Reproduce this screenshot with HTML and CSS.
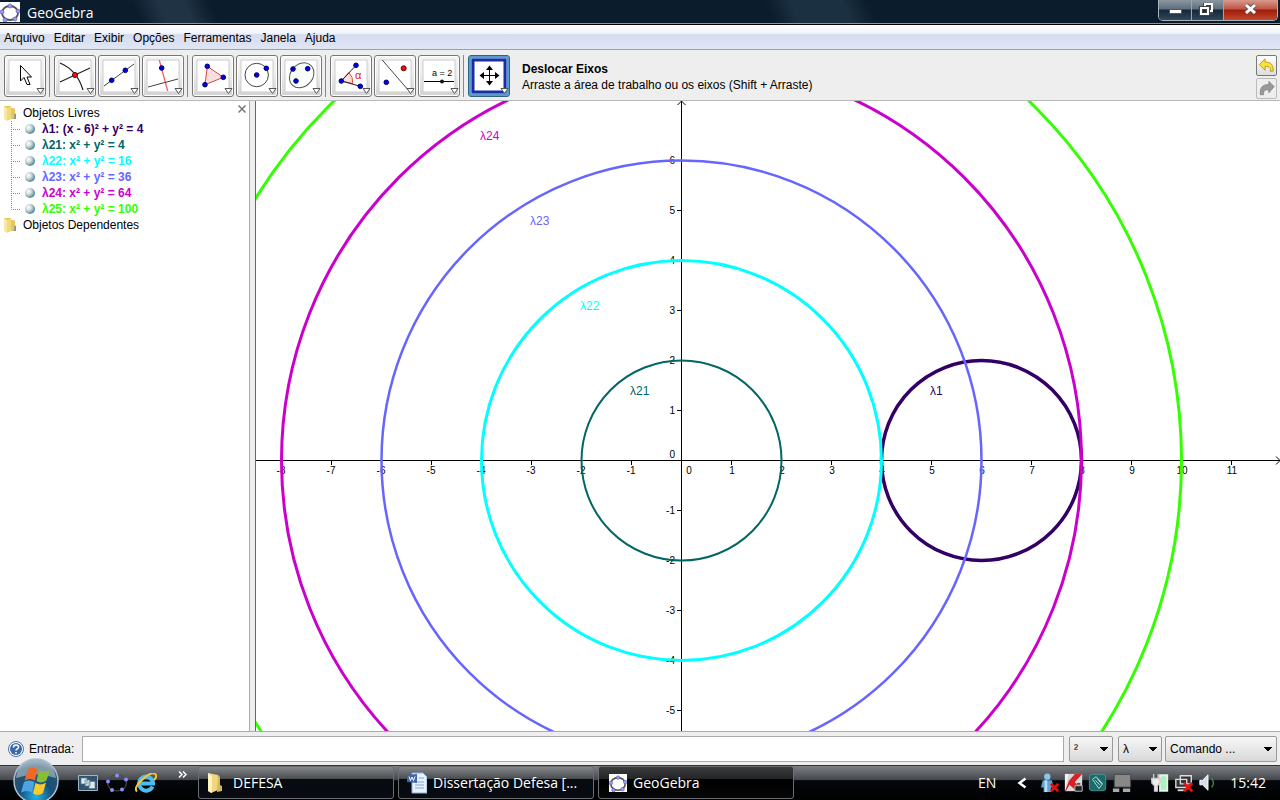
FILE: index.html
```html
<!DOCTYPE html>
<html lang="pt">
<head>
<meta charset="utf-8">
<title>GeoGebra</title>
<link rel="stylesheet" href="styles.css">
</head>
<body>
<svg class="defs" width="0" height="0" aria-hidden="true">
  <symbol id="logo" viewBox="0 0 20 20">
    <ellipse cx="10" cy="11" rx="8" ry="7" fill="none" stroke="#555" stroke-width="1.800"/>
    <g fill="#9999ff" stroke="#5555aa" stroke-width=".6"><circle cx="10" cy="4" r="2"/><circle cx="18" cy="9" r="2"/><circle cx="15" cy="17" r="2"/><circle cx="5" cy="18" r="2"/><circle cx="2" cy="10" r="2"/></g>
  </symbol>
  <symbol id="drop" viewBox="0 0 42 42"><path d="M33 33.500h7l-3.500 5z" fill="#fff" stroke="#555"/></symbol>
  <symbol id="folder" viewBox="0 0 14 16">
    <path d="M1 1h7v13l-4 1.500-3-2z" fill="#e3c65f"/><path d="M1 1l3 2v12.500l-3-2z" fill="#f8e8a0"/><path d="M8 2.500l4 1v10.500H7V5z" fill="#e4c662"/><path d="M4 3l4-1.500V14l-4 1.500z" fill="#f0d87c"/><path d="M11.500 8l1.500 1v5h-2z" fill="#7f9a86"/>
  </symbol>
</svg>
<header class="titlebar">
  <svg class="app-logo" viewBox="0 0 20 20"><use href="#logo"/></svg>
  <h1 class="app-title">GeoGebra</h1>
  <div class="window-buttons">
    <button class="win" aria-label="Minimizar"><svg width="32" height="20"><rect x="10.500" y="9.500" width="12" height="4" fill="#fff" stroke="#555"/></svg></button>
    <button class="win" aria-label="Restaurar"><svg width="31" height="20"><g fill="none" stroke="#444" stroke-width="4"><path d="M13 6v-1h6v7h-2"/><rect x="9" y="8" width="7" height="6"/></g><g fill="none" stroke="#fff" stroke-width="2"><path d="M13 6v-2h7v7h-2"/><rect x="9" y="8" width="7" height="6"/></g></svg></button>
    <button class="win win-close" aria-label="Fechar"><svg width="53" height="20"><path d="M22 5l9 8m0-8l-9 8" stroke="#655" stroke-width="5"/><path d="M22 5l9 8m0-8l-9 8" stroke="#fff" stroke-width="3"/></svg></button>
  </div>
</header>
<nav class="menubar">
  <button>Arquivo</button><button>Editar</button><button>Exibir</button><button>Opções</button><button>Ferramentas</button><button>Janela</button><button>Ajuda</button>
</nav>
<div class="toolbar">
  <div class="tools">
    <div class="tool-group">
      <button class="tool" aria-label="Mover"><svg viewBox="0 0 42 42"><path class="paper" d="M5 5h32v32H5z"/><path d="M16.500 10.500v15.500l3.500-3.500 3 7h3l-3-7.500h4.500z" fill="#fff" stroke="#000"/><use href="#drop"/></svg></button>
    </div>
    <div class="tool-group">
      <button class="tool" aria-label="Interseção"><svg viewBox="0 0 42 42"><path class="paper" d="M5 5h32v32H5z"/><path d="M6 8Q23 15 29 35M6 27l30-14" fill="none" stroke="#222" stroke-width="1.200"/><circle cx="21" cy="20" r="2.500" fill="#e11" stroke="#600"/><use href="#drop"/></svg></button>
      <button class="tool" aria-label="Reta"><svg viewBox="0 0 42 42"><path class="paper" d="M5 5h32v32H5z"/><path d="M6 31L36 9" stroke="#444"/><g class="dot"><circle cx="13.700" cy="25.300" r="2.300"/><circle cx="27.300" cy="15.300" r="2.300"/></g><use href="#drop"/></svg></button>
      <button class="tool" aria-label="Perpendicular"><svg viewBox="0 0 42 42"><path class="paper" d="M5 5h32v32H5z"/><path d="M17.300 5l8.400 31" stroke="#f55" stroke-width="1.200"/><path d="M6 32l30-8" stroke="#444"/><circle class="dot" cx="19.700" cy="13" r="2.300"/><use href="#drop"/></svg></button>
    </div>
    <div class="tool-group">
      <button class="tool" aria-label="Polígono"><svg viewBox="0 0 42 42"><path class="paper" d="M5 5h32v32H5z"/><path d="M15.300 11.300l16 11L13 29.700z" fill="#fbe0e0" stroke="#d44"/><g class="dot"><circle cx="15.300" cy="11.300" r="2.300"/><circle cx="31.300" cy="22.300" r="2.300"/><circle cx="13" cy="29.700" r="2.300"/></g><use href="#drop"/></svg></button>
      <button class="tool" aria-label="Círculo"><svg viewBox="0 0 42 42"><path class="paper" d="M5 5h32v32H5z"/><circle cx="20.700" cy="20" r="11.700" fill="none" stroke="#444"/><g class="dot"><circle cx="20.700" cy="20" r="2.300"/><circle cx="30.300" cy="13.300" r="2.300"/></g><use href="#drop"/></svg></button>
      <button class="tool" aria-label="Elipse"><svg viewBox="0 0 42 42"><path class="paper" d="M5 5h32v32H5z"/><ellipse cx="21.700" cy="20.300" rx="13.500" ry="11" transform="rotate(-48 21.700 20.300)" fill="#fafffa" stroke="#555"/><g class="dot"><circle cx="13" cy="14" r="2.300"/><circle cx="27.700" cy="13.700" r="2.300"/><circle cx="16" cy="26" r="2.300"/></g><use href="#drop"/></svg></button>
    </div>
    <div class="tool-group">
      <button class="tool" aria-label="Ângulo"><svg viewBox="0 0 42 42"><path class="paper" d="M5 5h32v32H5z"/><path d="M11.300 26l7.500-8.500q4.500 4.500 4 11z" fill="#fbe0e0" stroke="#e44"/><path d="M26 10.300L11.300 26l19 5.300" fill="none" stroke="#222"/><g class="dot"><circle cx="11.300" cy="26" r="2.300"/><circle cx="26" cy="10.300" r="2.300"/><circle cx="30.300" cy="31.300" r="2.300"/></g><text class="alpha" x="25" y="24">α</text><use href="#drop"/></svg></button>
      <button class="tool" aria-label="Reflexão"><svg viewBox="0 0 42 42"><path class="paper" d="M5 5h32v32H5z"/><path d="M8.300 5l26.700 31" stroke="#444"/><circle cx="29.700" cy="13.300" r="2.500" fill="#e11" stroke="#600"/><circle class="dot" cx="12.300" cy="27.300" r="2.300"/><use href="#drop"/></svg></button>
      <button class="tool" aria-label="Seletor"><svg viewBox="0 0 42 42"><path class="paper" d="M5 5h32v32H5z"/><path d="M6 26.500h30" stroke="#000"/><circle cx="24" cy="26.500" r="2" fill="#111"/><text class="slider-text" x="14" y="21">a = 2</text><use href="#drop"/></svg></button>
    </div>
    <div class="tool-group">
      <button class="tool tool-active" aria-label="Deslocar Eixos"><svg viewBox="0 0 42 42"><path d="M5 5h32v32H5z" fill="#fff" stroke="#1c2ba6" stroke-width="3"/><path d="M12 20.500h19M21.500 11v19" stroke="#000"/><path d="M21.500 10.500l3.500 4.500h-7zM21.500 30.500l3.500-4.500h-7zM11.500 20.500l4.500-3.500v7zM31.500 20.500l-4.500-3.500v7z"/><use href="#drop"/></svg></button>
    </div>
  </div>
  <div class="tool-help"><strong>Deslocar Eixos</strong><span>Arraste a área de trabalho ou os eixos (Shift + Arraste)</span></div>
  <div class="history">
    <button class="hist" aria-label="Desfazer"><svg viewBox="0 0 20 20"><path d="M2.500 9l6-6v3.500c6-.500 9 3 8.500 9.500h-3c1-4-1-5.500-5.500-5v4z" fill="#fbe335" stroke="#b99a12"/></svg></button>
    <button class="hist hist-off" aria-label="Refazer" disabled><svg viewBox="0 0 20 20"><path d="M18 8l-5.500-5.500V6C6 5.500 3 9 3.500 16.500h3.500c-.500-4 1-5.500 5.500-5v3z" fill="#999" stroke="#888"/></svg></button>
  </div>
</div>
<main class="workspace">
  <aside class="algebra">
    <button class="close" aria-label="Fechar painel"><svg viewBox="0 0 8 8"><path d="M.500.500l7 7m0-7l-7 7" stroke="#777" stroke-width="1.500"/></svg></button>
    <ul class="tree">
      <li><div class="row folder-row"><svg class="folder" viewBox="0 0 14 16"><use href="#folder"/></svg>Objetos Livres</div>
        <ul class="branch">
          <li class="row leaf c1"><i class="ball"></i>λ1: (x - 6)² + y² = 4</li>
          <li class="row leaf c21"><i class="ball"></i>λ21: x² + y² = 4</li>
          <li class="row leaf c22"><i class="ball"></i>λ22: x² + y² = 16</li>
          <li class="row leaf c23"><i class="ball"></i>λ23: x² + y² = 36</li>
          <li class="row leaf c24"><i class="ball"></i>λ24: x² + y² = 64</li>
          <li class="row leaf c25"><i class="ball"></i>λ25: x² + y² = 100</li>
        </ul>
      </li>
      <li><div class="row folder-row"><svg class="folder" viewBox="0 0 14 16"><use href="#folder"/></svg>Objetos Dependentes</div></li>
    </ul>
  </aside>
  <div class="splitter"></div>
  <section class="drawing">
    <svg class="plot" viewBox="256 101 1024 630" preserveAspectRatio="xMidYMid slice">
      <g class="axis">
        <path d="M256 460.500h1024M681.500 101v630"/>
        <path d="M1276 456.500l4 4-4 4M677.500 105l4-4 4 4"/>
        <path d="M281.500 460v5M331.500 460v5M381.500 460v5M431.500 460v5M481.500 460v5M531.500 460v5M581.500 460v5M631.500 460v5M731.500 460v5M781.500 460v5M831.500 460v5M881.500 460v5M931.500 460v5M981.500 460v5M1031.500 460v5M1081.500 460v5M1131.500 460v5M1181.500 460v5M1231.500 460v5"/>
        <path d="M677 160.500h5M677 210.500h5M677 260.500h5M677 310.500h5M677 360.500h5M677 410.500h5M677 510.500h5M677 560.500h5M677 610.500h5M677 660.500h5M677 710.500h5"/>
      </g>
      <g class="numbers x-numbers">
        <text x="281" y="474">-8</text><text x="331" y="474">-7</text><text x="381" y="474">-6</text><text x="431" y="474">-5</text><text x="481" y="474">-4</text><text x="531" y="474">-3</text><text x="581" y="474">-2</text><text x="631" y="474">-1</text><text x="689" y="474">0</text><text x="732" y="474">1</text><text x="782" y="474">2</text><text x="832" y="474">3</text><text x="882" y="474">4</text><text x="932" y="474">5</text><text x="982" y="474">6</text><text x="1032" y="474">7</text><text x="1082" y="474">8</text><text x="1132" y="474">9</text><text x="1182" y="474">10</text><text x="1232" y="474">11</text>
      </g>
      <g class="numbers y-numbers">
        <text x="675" y="164">6</text><text x="675" y="214">5</text><text x="675" y="264">4</text><text x="675" y="314">3</text><text x="675" y="364">2</text><text x="675" y="414">1</text><text x="675" y="458">0</text><text x="675" y="514">-1</text><text x="675" y="564">-2</text><text x="675" y="614">-3</text><text x="675" y="664">-4</text><text x="675" y="714">-5</text>
      </g>
      <g fill="none">
        <circle cx="981.500" cy="460.500" r="100" stroke="#330066" stroke-width="3.500"/>
        <circle cx="681.500" cy="460.500" r="100" stroke="#006666" stroke-width="2"/>
        <circle cx="681.500" cy="460.500" r="200" stroke="#00ffff" stroke-width="3"/>
        <circle cx="681.500" cy="460.500" r="300" stroke="#6666ff" stroke-width="2.500"/>
        <circle cx="681.500" cy="460.500" r="400" stroke="#cc00cc" stroke-width="3"/>
        <circle cx="681.500" cy="460.500" r="500" stroke="#33ff00" stroke-width="3"/>
      </g>
      <g class="labels">
        <text class="c1" x="930" y="395">λ1</text><text class="c21" x="630" y="395">λ21</text><text class="c22" x="580" y="310">λ22</text><text class="c23" x="530" y="225">λ23</text><text class="c24" x="480" y="140">λ24</text>
      </g>
    </svg>
  </section>
</main>
<form class="inputbar">
  <svg class="help" viewBox="0 0 16 16"><circle cx="8" cy="8" r="7.500" fill="#fff" stroke="#4b71a8"/><circle cx="8" cy="8" r="6" fill="#3c68a8"/><path d="M5.500 6.500q0-2.500 2.500-2.500t2.500 2q0 1.200-1.300 1.900Q8 8.500 8 9.500M8 11v1.500" fill="none" stroke="#fff" stroke-width="1.600"/></svg>
  <label for="entrada">Entrada:</label>
  <input id="entrada" type="text">
  <select class="pick pick-power" aria-label="Potência"><option>²</option></select>
  <select class="pick pick-greek" aria-label="Letra grega"><option>λ</option></select>
  <select class="pick pick-command" aria-label="Comando"><option>Comando ...</option></select>
</form>
<footer class="taskbar">
  <div class="launch">
    <button class="start" aria-label="Iniciar"><svg viewBox="0 0 46 46">
      <defs><radialGradient id="orb" cx=".5" cy=".85" r=".9"><stop offset="0" stop-color="#23b6e8"/><stop offset=".4" stop-color="#15507c"/><stop offset=".75" stop-color="#31526c"/><stop offset="1" stop-color="#a9bdcb"/></radialGradient></defs>
      <circle cx="23" cy="23" r="22" fill="url(#orb)" stroke="#a8bfd0" stroke-width="1.500"/>
      <path d="M3 20Q5 2 23 2t20 18Q23 13 3 20z" fill="#c2d3de" opacity=".55"/>
      <path d="M15 11q4-3 9.500 0l-2.500 11.500q-5-3-10.500 0z" fill="#ee6a28"/><path d="M26 12q5 3 11-.500l-3.500 11q-5 3.500-10 .500z" fill="#87bd37"/><path d="M11 24q5-3 10.500 0l-2.500 10.500q-5-3-11 0z" fill="#4fa3e2"/><path d="M22.500 25q5 3 10.500-.500l-3 10.500q-5 3.500-10 .500z" fill="#fbc92e"/>
    </svg></button>
    <button class="quick" aria-label="Alternar janelas"><svg viewBox="0 0 22 20"><path d="M1.500 2.500h19v15h-19z" fill="#31536f" stroke="#9cb4c4"/><path d="M4 5h6v6H4zM8 7h5v6H8zM12 8.500h6v7h-6z" fill="#dcebf0" stroke="#55798c" stroke-width=".7"/></svg></button>
    <button class="quick" aria-label="GeoGebra"><svg viewBox="0 0 22 20"><ellipse cx="11" cy="10" rx="9.500" ry="8" fill="none" stroke="#4b4b4b" stroke-width="1.200"/><g fill="#8d8df5"><circle cx="11" cy="2.500" r="2"/><circle cx="20" cy="6.500" r="2"/><circle cx="16" cy="16.500" r="2"/><circle cx="6" cy="17" r="2"/><circle cx="2" cy="8.500" r="2"/></g></svg></button>
    <button class="quick" aria-label="Internet Explorer"><svg viewBox="0 0 22 20"><path d="M17.500 13.500A7 7 0 1 1 18 9.500v1H5" fill="none" stroke="#4cbdf2" stroke-width="4"/><path d="M2 18.500Q-2 15 8 6T21 2q1 2-2 5" fill="none" stroke="#f7c631" stroke-width="2"/></svg></button>
    <svg class="more" viewBox="0 0 9 7"><path d="M1 .500l3 3-3 3M5 .500l3 3-3 3" fill="none" stroke="#fff" stroke-width="1.500"/></svg>
  </div>
  <div class="tasks">
    <button class="task"><svg class="task-icon" viewBox="0 0 20 22"><path d="M1 1l10 2v15l-7 3-3-2z" fill="#efd67f"/><path d="M1 1l4 3v17l-4-2z" fill="#fff3bf"/><path d="M11 3l2 2v8l2 1v5l-5 1z" fill="#d6b759"/></svg><span>DEFESA</span></button>
    <button class="task task-word"><svg class="task-icon" viewBox="0 0 20 22"><path d="M5 1h11l4 4v16H5z" fill="#e8f1fc" stroke="#8fb0d8"/><path d="M8 10h9M8 13h9M8 16h9M12 6h5" stroke="#7fa4d6"/><path d="M0 3l10-1v9L0 10z" fill="#3c65ad"/><path d="M2 4.500l1.500 4L5 5l1.500 3.500L8 4.500" fill="none" stroke="#fff"/></svg><span>Dissertação Defesa [...</span></button>
    <button class="task task-current"><svg class="app-logo task-logo" viewBox="0 0 20 20"><use href="#logo"/></svg><span>GeoGebra</span></button>
  </div>
  <div class="tray">
    <span class="lang">EN</span>
    <svg class="chevron" viewBox="0 0 10 12"><path d="M8.500 1.500L2.500 6l6 4.500" fill="none" stroke="#fff" stroke-width="2.500"/></svg>
    <svg class="tray-icon" viewBox="0 0 22 22"><circle cx="8" cy="4" r="3.500" fill="#8fc4ea"/><path d="M3 8h10l2 8h-3v5H4v-5H1z" fill="#5fa2d6"/><path d="M5 8h3v13H5z" fill="#b7dcf5"/><path d="M12 12l8 8m0-8l-8 8" stroke="#d11" stroke-width="3"/></svg>
    <svg class="tray-icon" viewBox="0 0 22 22"><path d="M1 1h19v19H1z" fill="#d8d8d8"/><path d="M5 1v8l7-8h8l-8 9 2 3v7L6 13l-4 7H1L5 10z" fill="#d92121"/><path d="M1 1h4L1 19z" fill="#f4f4f4"/><path d="M12 14h8v6h-8z" fill="#222" stroke="#bbb"/><path d="M14 12h4" stroke="#555" stroke-width="2"/></svg>
    <svg class="tray-icon" viewBox="0 0 22 22"><rect x="1.500" y="1.500" width="18" height="18" rx="3" fill="#1d6a6b" stroke="#4b9593"/><path d="M5 7l4-3 7 8-4 5z" fill="none" stroke="#bde5dd"/><path d="M8 8l5 5m-3-7l5 6" stroke="#bde5dd"/></svg>
    <svg class="tray-icon" viewBox="0 0 22 22"><path d="M2.500 1.500h18v14h-18z" fill="#888" stroke="#444"/><path d="M1 17h7v4H1zm11 0h8v4h-8z" fill="#aaa"/></svg>
    <svg class="tray-icon tray-gap" viewBox="0 0 22 22"><path d="M11 2.500h8v17h-8z" fill="#a5f5bc" stroke="#eee" stroke-width="2"/><path d="M2 6h9v5l-3 3v6H5v-6l-3-3zM4 1v5m5-5v5" fill="#eee" stroke="#ccc" stroke-width="1.500"/></svg>
    <svg class="tray-icon" viewBox="0 0 22 22"><path d="M7 3h12v9H7zM2 7h12v9H2z" fill="#333" stroke="#ddd" stroke-width="1.500"/><path d="M4 19h8" stroke="#ddd" stroke-width="2"/><path d="M11 11l9 9m0-9l-9 9" stroke="#e11" stroke-width="3"/></svg>
    <svg class="tray-icon" viewBox="0 0 22 22"><path d="M2 8h3l6-6v17l-6-6H2z" fill="#d9dde8" stroke="#fff"/><path d="M15 6q4 5 0 10" fill="none" stroke="#408550" stroke-width="1.500"/></svg>
    <time class="clock">15:42</time>
  </div>
</footer>
</body>
</html>
```
FILE: styles.css
```css
* { box-sizing: border-box; }
body {
  margin: 0;
  height: 100vh;
  display: flex;
  flex-direction: column;
  overflow: hidden;
  background: #eee;
  color: #000;
  font: 12px/16px "Liberation Sans", Arial, sans-serif;
}
button, input, select { font: inherit; color: inherit; margin: 0; }
button { padding: 0; border: 0; background: none; }
svg { display: block; }
ul { list-style: none; margin: 0; padding: 0; }
.defs { position: absolute; }

.titlebar {
  display: flex;
  height: 25px;
  flex: none;
  align-items: center;
  padding-right: 2px;
  background: linear-gradient(65deg, transparent 0 11%, #203344 13% 15%, transparent 17% 60%, #1b3040 62% 66%, transparent 68%), #0b1c2c;
  border-bottom: 1px solid #000;
  box-shadow: inset 0 -1px #8797a5;
  color: #fff;
}
.app-logo { width: 20px; height: 20px; background: #fff; }
.app-title { flex: 1; margin: 2px 0 0 7px; font: 14px/20px "Open Sans", "Noto Sans", sans-serif; }
.window-buttons { display: flex; align-self: flex-start; border: 1px solid #aab4bd; border-top: 0; border-radius: 0 0 5px 5px; overflow: hidden; }
.win { height: 20px; border-right: 1px solid #9aa5af; background: linear-gradient(#8b98a3, #5f6e7b 45%, #15283a 50%, #31475a); }
.win-close { border-right: 0; background: linear-gradient(#d89a8d, #bf5545 45%, #9f1c09 50%, #c2482e); }

.menubar {
  display: flex;
  flex: none;
  gap: 9px;
  height: 25px;
  align-items: center;
  padding: 2px 0 0 4px;
  background: linear-gradient(#fff, #f0f3fa 35%, #d5dcef 40%, #e0e6f5);
  border-bottom: 1px solid #a0a0a0;
}

.toolbar { display: flex; flex: none; height: 51px; padding: 5px 3px 0 4px; background: #eee; border-bottom: 1px solid #b8b8b8; }
.tools { display: flex; }
.tool-group { display: flex; gap: 2px; height: 42px; }
.tool-group + .tool-group { margin-left: 3px; padding-left: 4px; border-left: 1px solid #888; }
.tool { width: 42px; height: 42px; border: 1px solid #777; border-radius: 3px; background: linear-gradient(#f4f4f4, #ececec 50%, #d2d2d2); box-shadow: inset 0 0 0 1px #fff; }
.tool svg { width: 42px; height: 42px; margin: -1px; }
.tool-active { border-color: #2c628b; background: #9fd0ee; box-shadow: inset 0 0 0 2px #5a9bc8; }
.paper { fill: #fff; stroke: #ccc; }
.dot { fill: #00e; stroke: #006; }
.alpha { font-size: 11px; fill: #d22; }
.slider-text { font-size: 9px; }
.tool-help { display: flex; flex: 1; flex-direction: column; padding: 6px 0 0 12px; }
.history { display: flex; flex-direction: column; gap: 2px; }
.hist { width: 21px; height: 21px; border: 1px solid #777; border-radius: 2px; background: linear-gradient(#fff, #ddd); }
.hist svg { width: 19px; height: 19px; }
.hist-off { border-color: #bbb; background: #eee; }

.workspace { display: flex; flex: 1; min-height: 0; background: #fff; }
.algebra { position: relative; width: 250px; flex: none; padding: 4px 0 0 3px; border-right: 1px solid #aaa; }
.close { position: absolute; top: 4px; right: 3px; }
.close svg { width: 8px; height: 8px; }
.row { display: flex; align-items: center; height: 16px; white-space: nowrap; }
.folder-row { gap: 6px; }
.folder { width: 14px; height: 16px; }
.branch { margin-left: 8px; background: repeating-linear-gradient(#888 0 1px, transparent 1px 2px) 0 0 / 1px 88px no-repeat; }
.leaf { font-weight: bold; }
.leaf::before { content: ""; width: 10px; height: 1px; background: repeating-linear-gradient(90deg, #888 0 1px, transparent 1px 2px); }
.ball { width: 10px; height: 10px; margin: 0 7px 0 4px; border-radius: 50%; background: radial-gradient(circle at 35% 35%, #fff, #c3d5d6 35%, #4a8094 75%, #3a6678); }
.c1 { color: #330066; fill: #330066; }
.c21 { color: #006666; fill: #006666; }
.c22 { color: #00ffff; fill: #00ffff; }
.c23 { color: #6666ff; fill: #6666ff; }
.c24 { color: #cc00cc; fill: #cc00cc; }
.c25 { color: #33ff00; fill: #33ff00; }
.splitter { width: 6px; flex: none; background: #eee; border-right: 1px solid #666; }
.drawing { flex: 1; min-width: 0; }
.plot { width: 100%; height: 100%; }
.axis { fill: none; stroke: #000; }
.numbers { font-size: 10px; }
.x-numbers { text-anchor: middle; }
.y-numbers { text-anchor: end; }
.labels { font-size: 12px; }

.inputbar { display: flex; flex: none; height: 34px; align-items: center; gap: 5px; padding: 0 3px 0 8px; background: #eee; border-top: 1px solid #aaa; }
.help { width: 16px; height: 16px; }
.inputbar input { flex: 1; min-width: 0; height: 26px; margin-left: 3px; border: 1px solid #aaa; background: #fff; }
.pick {
  height: 26px;
  padding: 0 4px;
  appearance: none;
  border: 1px solid #999;
  border-radius: 2px;
  background: linear-gradient(to bottom right, #000 50%, transparent 52%) right 4px center / 4px 4px no-repeat, linear-gradient(to bottom left, #000 50%, transparent 52%) right 8px center / 4px 4px no-repeat, linear-gradient(#f6f6f6, #e8e8e8 50%, #d8d8d8);
}
.pick-power, .pick-greek { width: 44px; }
.pick-greek { margin-right: -2px; }
.pick-command { width: 112px; }

.taskbar {
  display: flex;
  flex: none;
  height: 35px;
  background: linear-gradient(#7c8084, #45494d 40%, #04080c 43%, #000);
  border-top: 1px solid #333;
  color: #fff;
  font: 14px/20px "Open Sans", "Noto Sans", sans-serif;
}
.launch { position: relative; display: flex; width: 198px; flex: none; align-items: center; gap: 7px; padding-left: 77px; }
.start { position: absolute; left: 13px; top: -8px; }
.start svg { width: 46px; height: 46px; }
.quick svg { width: 22px; height: 20px; }
.more { width: 9px; height: 7px; margin: 0 0 18px 14px; }
.tasks { display: flex; flex: 1; gap: 4px; min-width: 0; }
.task { display: flex; flex: 0 1 196px; min-width: 0; height: 33px; align-items: center; gap: 6px; padding-left: 8px; border: 1px solid #6a6e72; border-radius: 3px; background: linear-gradient(#85888a, #4b4e51 37%, #070b10 40%, #080c12); text-align: left; white-space: nowrap; overflow: hidden; }
.task-current { background: linear-gradient(#3b3c3d, #242526 37%, #000 40%, #070707); padding-left: 10px; }
.task-icon { width: 20px; height: 22px; flex: none; }
.task-logo { width: 18px; height: 18px; flex: none; }
.tray { display: flex; flex: none; align-items: center; gap: 3px; padding-right: 14px; }
.lang { margin-right: 18px; }
.chevron { width: 10px; height: 12px; margin-right: 10px; }
.tray-icon { width: 20px; height: 22px; }
.tray-icon + .tray-icon { margin-left: 1px; }
.tray-icon + .tray-gap { margin-left: 15px; }
.clock { margin-left: 9px; }
```
